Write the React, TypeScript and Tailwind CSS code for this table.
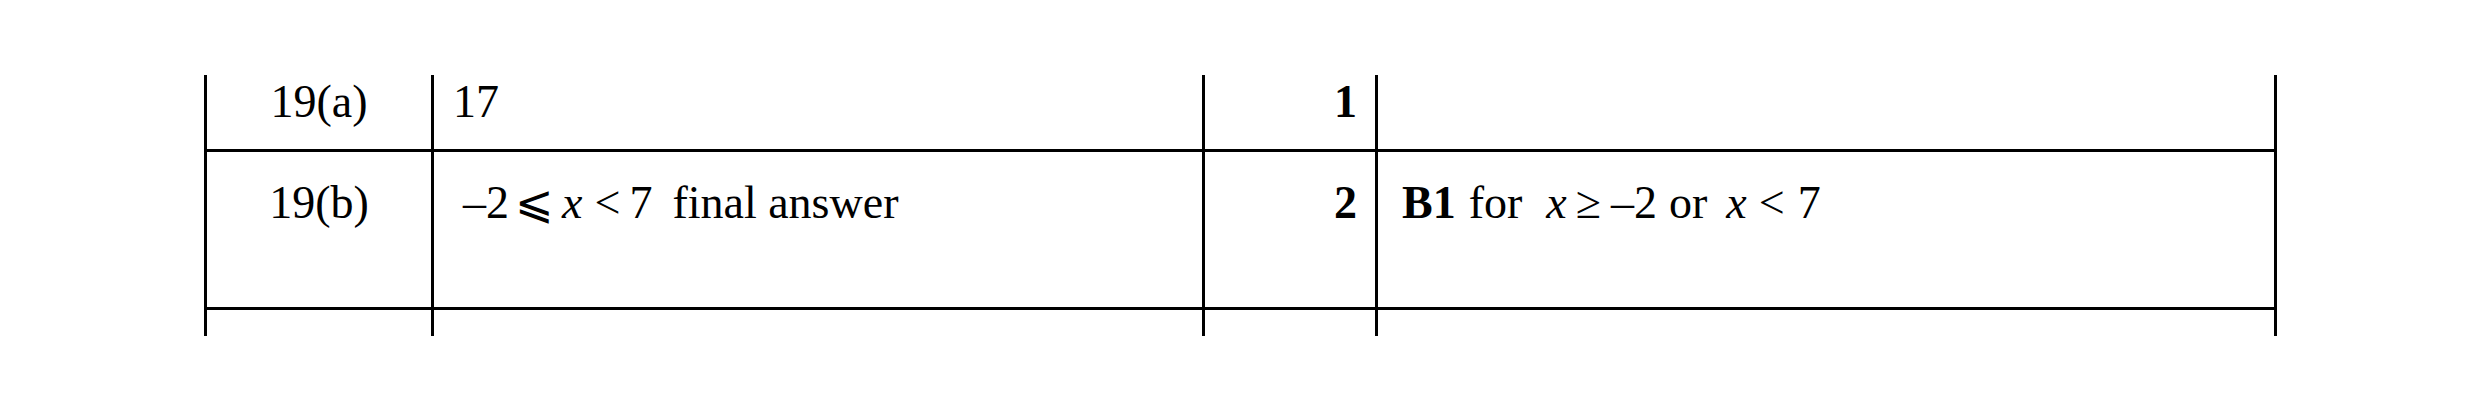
const serif = "font-['Liberation_Serif','Times_New_Roman',serif]";

function Cell({ w, last, className, children }: { w: string; last?: boolean; className?: string; children?: React.ReactNode }) {
  return (
    <div className={`${w} shrink-0 border-l-[3px] border-black ${last ? 'border-r-[3px]' : ''} ${className ?? ''}`}>
      {children}
    </div>
  );
}

function Row({ h, border, pt, cells }: { h: string; border?: boolean; pt: string; cells: React.ReactNode[] }) {
  return (
    <div className={`flex ${h} ${border ? 'border-b-[3px] border-black' : ''}`}>
      <Cell w="w-[227px]" className={`${pt} text-center`}>{cells[0]}</Cell>
      <Cell w="w-[771px]" className={`${pt} pl-[19px]`}>{cells[1]}</Cell>
      <Cell w="w-[173px]" className={`${pt} pr-[18px] text-right font-bold`}>{cells[2]}</Cell>
      <Cell w="w-[902px]" last className={`${pt} pl-[24px]`}>{cells[3]}</Cell>
    </div>
  );
}

export default function App() {
  return (
    <div className={`min-h-[411px] w-[2480px] bg-white pl-[204px] pt-[75px] text-[46px] leading-none text-black ${serif}`}>
      <div className="w-[2073px]">
        <Row h="h-[77px]" border pt="pt-[4px]" cells={['19(a)', '17', '1', null]} />
        <Row
          h="h-[158px]"
          border
          pt="pt-[28px]"
          cells={[
            '19(b)',
            <div className="flex items-baseline whitespace-pre">
              <span className="ml-[10px]">–2</span>
              <span className="ml-[6px] font-['DejaVu_Sans',sans-serif] text-[46px] font-extralight leading-[30px]">⩽</span>
              <span className="ml-[8px] italic">x</span>
              <span className="ml-[12px]">&lt;</span>
              <span className="ml-[9px]">7</span>
              <span className="ml-[20px]">final answer</span>
            </div>,
            '2',
            <div className="flex items-baseline whitespace-pre">
              <span className="font-bold">B1</span>
              <span className="ml-[13px]">for</span>
              <span className="ml-[24px] italic">x</span>
              <span className="ml-[9px]">≥</span>
              <span className="ml-[10px]">–2</span>
              <span className="ml-[12px]">or</span>
              <span className="ml-[19px] italic">x</span>
              <span className="ml-[12px]">&lt;</span>
              <span className="ml-[13px]">7</span>
            </div>,
          ]}
        />
        <Row h="h-[26px]" pt="pt-0" cells={[null, null, null, null]} />
      </div>
    </div>
  );
}
